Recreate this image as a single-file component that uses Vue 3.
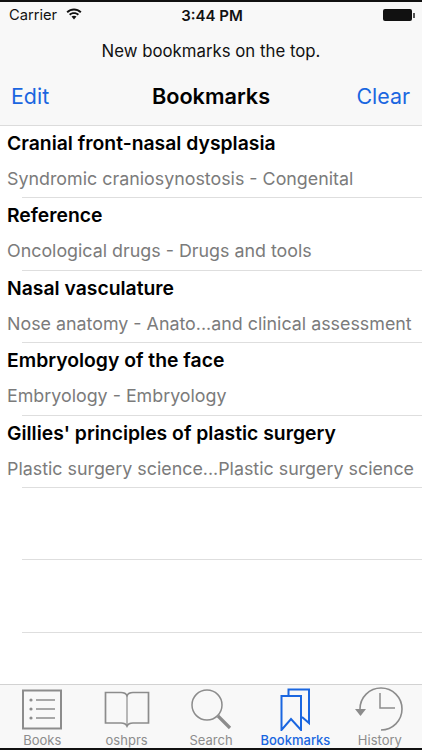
<template>
  <div class="screen">
    <div class="status">
      <div class="status-left">
        <span>Carrier</span>
        <svg class="wifi" width="16" height="12" viewBox="0 0 16 12">
          <path d="M0.5 3.6 C4.8 -0.4 11.2 -0.4 15.5 3.6 L14.2 5 C10.5 1.7 5.5 1.7 1.8 5 Z" fill="#111" />
          <path d="M3 6.1 C5.9 3.5 10.1 3.5 13 6.1 L11.7 7.5 C9.5 5.6 6.5 5.6 4.3 7.5 Z" fill="#111" />
          <path d="M5.5 8.6 C7 7.3 9 7.3 10.5 8.6 L8 11.4 Z" fill="#111" />
        </svg>
      </div>
      <span class="clock">3:44 PM</span>
      <div class="battery"><i></i></div>
    </div>
    <div class="hint">New bookmarks on the top.</div>
    <div class="nav">
      <span class="link">Edit</span>
      <span class="title">Bookmarks</span>
      <span class="link">Clear</span>
    </div>

    <div class="list">
      <div v-for="b in bookmarks" :key="b.title" class="row">
        <div class="row-title">{{ b.title }}</div>
        <div class="row-sub">{{ b.sub }}</div>
      </div>
      <div v-for="n in 3" :key="n" class="row"></div>
    </div>

    <div class="tabs">
      <div class="tab">
        <svg width="42" height="44" viewBox="0 0 42 44" fill="none" stroke="#8c8c8c">
          <rect x="2" y="3.5" width="38" height="38" stroke-width="2" />
          <circle cx="10" cy="13" r="1.6" fill="#8c8c8c" stroke="none" />
          <circle cx="10" cy="22" r="1.6" fill="#8c8c8c" stroke="none" />
          <circle cx="10" cy="31" r="1.6" fill="#8c8c8c" stroke="none" />
          <path d="M15 13H34M15 22H34M15 31H34" stroke-width="1.3" />
        </svg>
        <span>Books</span>
      </div>
      <div class="tab">
        <svg width="46" height="44" viewBox="0 0 46 44" fill="none" stroke="#8c8c8c" stroke-width="1.7">
          <path d="M1.5 5.5H17C20 5.5 22 6.5 23 8.5C24 6.5 26 5.5 29 5.5H44.5V36H29C26 36 24 37 23 39C22 37 20 36 17 36H1.5Z" />
          <path d="M23 8.5V39" stroke-width="1.2" />
        </svg>
        <span>oshprs</span>
      </div>
      <div class="tab">
        <svg width="46" height="44" viewBox="0 0 46 44" fill="none" stroke="#8c8c8c">
          <circle cx="19" cy="18" r="15" stroke-width="1.5" />
          <path d="M30 29L42 41" stroke-width="3.2" />
        </svg>
        <span>Search</span>
      </div>
      <div class="tab active">
        <svg width="32" height="44" viewBox="0 0 32 44" fill="none" stroke="#1a66e0" stroke-width="2">
          <path d="M9.5 9V2.5H30V36L23 30" />
          <path d="M2.5 9H22V43L12 32L2.5 43Z" />
        </svg>
        <span>Bookmarks</span>
      </div>
      <div class="tab">
        <svg width="50" height="44" viewBox="0 0 50 44" fill="none" stroke="#8c8c8c">
          <path d="M5 22A21 21 0 1 1 26 43" stroke-width="1.6" />
          <path d="M0 22H11L5.5 29Z" fill="#8c8c8c" stroke="none" />
          <path d="M25 6V21H40" stroke-width="1.5" />
        </svg>
        <span>History</span>
      </div>
    </div>
  </div>
</template>

<script setup>
const bookmarks = [
  { title: "Cranial front-nasal dysplasia", sub: "Syndromic craniosynostosis - Congenital" },
  { title: "Reference", sub: "Oncological drugs - Drugs and tools" },
  { title: "Nasal vasculature", sub: "Nose anatomy - Anato...and clinical assessment" },
  { title: "Embryology of the face", sub: "Embryology - Embryology" },
  { title: "Gillies' principles of plastic surgery", sub: "Plastic surgery science...Plastic surgery science" },
];
</script>

<style>
html, body { margin: 0; background: #fff; }
</style>

<style scoped>
.screen {
  width: 422px;
  height: 750px;
  display: flex;
  flex-direction: column;
  overflow: hidden;
  font-family: Inter, "Liberation Sans", sans-serif;
  background: #fff;
  border-top: 2px solid #111;
  border-bottom: 2px solid #111;
  box-sizing: border-box;
}
.status {
  height: 26px;
  flex: none;
  display: flex;
  align-items: center;
  justify-content: space-between;
  padding: 0 8px 0 9px;
  background: #f8f8f8;
  font-size: 14.7px;
  color: #111;
  position: relative;
}
.status-left { display: flex; align-items: center; gap: 9px; }
.wifi { margin-bottom: 2px; }
.clock {
  position: absolute;
  left: 2px;
  right: 0;
  text-align: center;
  font-weight: 600;
  font-size: 15px;
}
.battery {
  width: 29px;
  height: 12px;
  background: #111;
  border-radius: 2px;
  position: relative;
  margin-right: 2px;
}
.battery i {
  position: absolute;
  right: -3px;
  top: 4px;
  width: 2px;
  height: 5px;
  background: #555;
}
.hint {
  height: 46px;
  flex: none;
  background: #f8f8f8;
  display: flex;
  align-items: center;
  justify-content: center;
  font-size: 16.8px;
  color: #111;
}
.nav {
  height: 52px;
  flex: none;
  box-sizing: border-box;
  padding: 0 12px 8px 11px;
  background: #f8f8f8;
  display: flex;
  align-items: center;
  justify-content: space-between;
  border-bottom: 1px solid #dcdcdc;
  position: relative;
}
.link { font-size: 21.4px; color: #1a66e0; z-index: 1; }
.title {
  position: absolute;
  left: 0;
  right: 0;
  text-align: center;
  font-size: 21.7px;
  font-weight: 600;
  color: #000;
}
.list { flex: 1; min-height: 0; overflow: hidden; }
.row {
  height: 72.4px;
  box-sizing: border-box;
  margin-left: 22px;
  border-bottom: 1px solid #dedede;
}
.row-title {
  margin-left: -15px;
  padding-top: 4px;
  height: 30px;
  line-height: 26px;
  font-size: 19.35px;
  font-weight: 600;
  color: #000;
  white-space: nowrap;
  box-sizing: border-box;
}
.row-sub {
  margin-left: -15px;
  padding-top: 10px;
  line-height: 26px;
  font-size: 17.85px;
  color: #7b7b7b;
  white-space: nowrap;
}
.tabs {
  height: 64px;
  flex: none;
  display: flex;
  background: #f8f8f8;
  border-top: 1px solid #d2d2d2;
  box-sizing: border-box;
}
.tab {
  flex: 1;
  display: flex;
  flex-direction: column;
  align-items: center;
  justify-content: flex-end;
  color: #8c8c8c;
  font-size: 13px;
  line-height: 16px;
}
.tab svg { display: block; margin-bottom: 1px; }
.tab.active { color: #1a66e0; font-weight: 500; }
</style>
